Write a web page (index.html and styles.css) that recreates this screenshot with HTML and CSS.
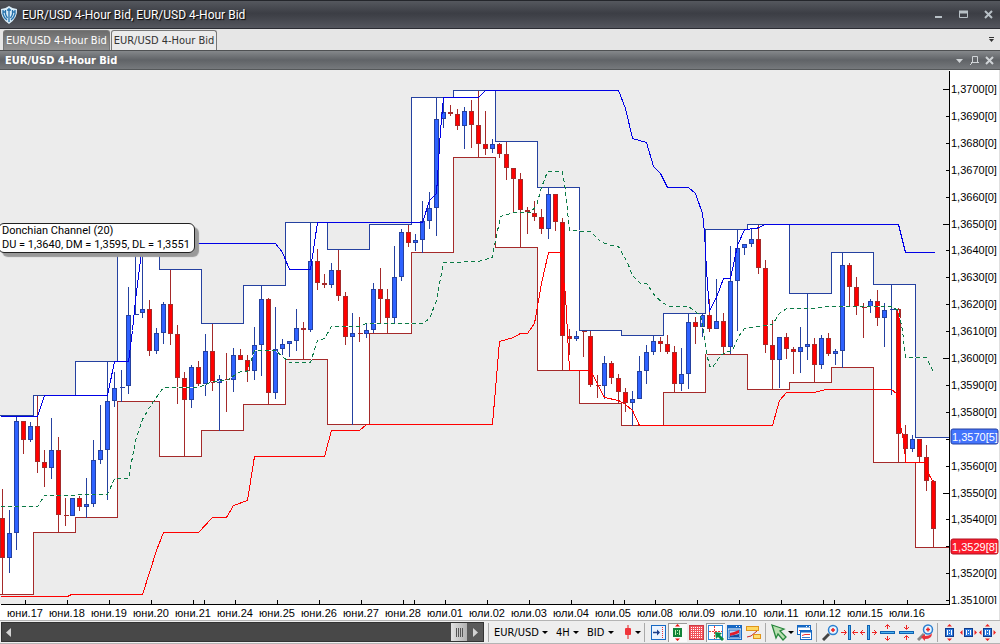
FILE: index.html
```html
<!DOCTYPE html>
<html lang="en">

<head>
    <meta charset="UTF-8">
    <meta name="viewport" content="width=device-width, initial-scale=1.0">
    <title>EUR/USD 4-Hour Bid</title>
    <link rel="stylesheet" href="styles.css">
</head>

<body>
    <header class="title-bar">
        <svg class="logo" width="18" height="18" viewBox="0 0 18 18">
            <path d="M1 3Q5 3 9 0Q13 3 17 3Q18 12 9 18Q0 12 1 3Z" fill="#d9ecf8" />
            <path d="M3 4V8Q4 12 7 14M5.500 4V8Q6 10 7.500 12M15 4V8Q14 12 11 14M12.500 4V8Q12 10 10.500 12M9 2V16M7 4H11M3 6H6M12 6H15" fill="none" stroke="#2470aa" stroke-width="1.300" />
        </svg>
        <h1>EUR/USD 4-Hour Bid, EUR/USD 4-Hour Bid</h1>
        <div class="window-buttons">
            <button aria-label="Minimize"><svg width="9" height="9"><path d="M1 7H8" stroke="#b8c0c6" stroke-width="2" /></svg></button>
            <button aria-label="Maximize"><svg width="9" height="9"><path d="M0 2H9" stroke="#b8c0c6" stroke-width="3" /><path d="M.5 2V7.500H8.500V2" stroke="#b8c0c6" fill="none" /></svg></button>
            <button aria-label="Close"><svg width="9" height="9"><path d="M1 1L8 8M8 1L1 8" stroke="#b8c0c6" stroke-width="2" /></svg></button>
        </div>
    </header>

    <nav class="tabs" role="tablist">
        <button class="tab active" role="tab" aria-selected="true">EUR/USD 4-Hour Bid</button>
        <button class="tab" role="tab" aria-selected="false">EUR/USD 4-Hour Bid</button>
        <button class="tab-menu" aria-label="Tab list"><svg width="5" height="6"><path d="M0 .5H5" stroke="#333" /><path d="M0 2H5L2.500 5Z" fill="#333" /></svg></button>
    </nav>

    <div class="panel-header">
        <h2>EUR/USD 4-Hour Bid</h2>
        <div class="panel-buttons">
            <button aria-label="Menu"><svg width="9" height="9"><path d="M1 3H8L4.500 7Z" fill="#d0d4d7" /></svg></button>
            <button aria-label="Pin"><svg width="9" height="9"><path d="M2.500 .5H7.500V6M2.500 .5V6.500M1 6.500H9M3 6L0 9" stroke="#d0d4d7" fill="none" /></svg></button>
            <button aria-label="Close"><svg width="9" height="9"><path d="M1 1L8 8M8 1L1 8" stroke="#d0d4d7" stroke-width="2" /></svg></button>
        </div>
    </div>

    <main class="chart">
        <svg class="chart-svg" id="chart" viewBox="0 70 1000 550"></svg>
        <div class="indicator-tip">
            <div>Donchian Channel (20)</div>
            <div>DU = 1,3640, DM = 1,3595, DL = 1,3551</div>
        </div>
    </main>

    <footer class="toolbar">
        <div class="scrollbar">
            <button class="scroll-left" aria-label="Scroll left"><svg width="6" height="9"><path d="M5 0V9L0 4.500Z" fill="#d4d4d4" /></svg></button>
            <div class="track"></div>
            <button class="thumb" aria-label="Scroll position"><svg width="9" height="9"><path d="M1.500 0V9M3.500 0V9M5.500 0V9M7.500 0V9" stroke="#555" /></svg></button>
            <button class="scroll-right" aria-label="Scroll right"><svg width="6" height="9"><path d="M1 0V9L6 4.500Z" fill="#d4d4d4" /></svg></button>
        </div>

        <div class="group selects">
            <label class="dropdown"><select aria-label="Instrument"><option>EUR/USD</option></select></label>
            <label class="dropdown"><select aria-label="Period"><option>4H</option></select></label>
            <label class="dropdown"><select aria-label="Side"><option>BID</option></select></label>
            <button class="dropdown" aria-label="Chart type"><svg width="8" height="14"><path d="M4 0V14" stroke="#e02020" /><rect x="1" y="3" width="6" height="7" rx="1" fill="#f0343a" /></svg></button>
        </div>

        <div class="group">
            <button aria-label="Shift chart"><svg width="17" height="17" viewBox="0 0 17 17"><rect x="1.500" y="1.500" width="14" height="14" fill="#eaf3ff" stroke="#1769c4" /><path d="M3 8.500H9" stroke="#1b3f8b" stroke-width="1.500" /><path d="M7 5.500L10 8.500L7 11.500Z" fill="#1b3f8b" /><path d="M12.500 3V14" stroke="#e33" stroke-dasharray="1 1" /></svg></button>
            <button class="pressed" aria-label="Auto scale"><svg width="17" height="17" viewBox="0 0 17 17"><rect x="4" y="4" width="9" height="9" fill="#14833a" /><path d="M6.500 6V11M10.500 6V11M8.500 6V7M8.500 9V10" stroke="#bff5b0" fill="none" /><path d="M6 2.500L8.500 0L11 2.500ZM6 14.500L8.500 17L11 14.500Z" fill="#e11" /></svg></button>
            <button aria-label="Grid"><svg width="17" height="17" viewBox="0 0 17 17"><rect x="1.500" y="1.500" width="14" height="14" fill="#f2545c" stroke="#cc3a44" /><path d="M3 3.500H15M3 5.500H15M3 7.500H15M3 9.500H15M3 11.500H15M3 13.500H15" stroke="#fff" stroke-dasharray="1 1" /></svg></button>
            <button class="pressed" aria-label="Crosshair"><svg width="17" height="17" viewBox="0 0 17 17"><rect x="1.500" y="1.500" width="14" height="14" fill="#fff" stroke="#2a84d8" /><path d="M7.500 2V15M2 7.500H15" stroke="#e33" stroke-dasharray="2 1" /><path d="M8 8L15 9L13 11L17 15L15 17L11 13L9 15Z" fill="#0d8a45" /></svg></button>
            <button aria-label="Chart window"><svg width="17" height="17" viewBox="0 0 17 17"><rect x="1.500" y="1.500" width="14" height="14" fill="#fff" stroke="#1769c4" /><path d="M1 3H16" stroke="#1769c4" stroke-width="3" /><path d="M10 2.500H11M13 2.500H14" stroke="#fff" /><rect x="3" y="6" width="11" height="8" fill="#b9d4f7" stroke="#1769c4" /><path d="M4 9L8 8L13 6V9L8 11L4 12Z" fill="#e21c2c" /><path d="M4 12L13 10V13H4Z" fill="#164b9e" /></svg></button>
            <button aria-label="Trade labels"><svg width="17" height="17" viewBox="0 0 17 17"><rect x="1.500" y="2.500" width="12" height="4" fill="#ffd860" stroke="#e0951a" /><path d="M2 13L6 12L12 7" stroke="#c62a2a" fill="none" /><rect x="8.500" y="10.500" width="7" height="4" fill="#ffe070" stroke="#e0951a" /></svg></button>
        </div>

        <div class="group">
            <button class="dropdown cursor" aria-label="Cursor"><svg width="17" height="17" viewBox="0 0 17 17"><path d="M1 1L13 5L9 7L15 13L12 16L7 10L5 14Z" fill="#b8dfb0" stroke="#27863b" stroke-width="1.300" /></svg></button>
            <button aria-label="Windows"><svg width="17" height="17" viewBox="0 0 17 17"><rect x="1.500" y="1.500" width="13" height="9" fill="#fff" stroke="#1769c4" /><path d="M1 2.500H15" stroke="#1769c4" stroke-width="2" /><path d="M3 6.500H5" stroke="#e33" /><rect x="4.500" y="6.500" width="11" height="9" fill="#fff" stroke="#1769c4" /><path d="M4 7.500H16" stroke="#1769c4" stroke-width="2" /><path d="M6 11.500L9 10.500H14" stroke="#e33" fill="none" /><path d="M10 2.500H11M13 2.500H14" stroke="#fff" /><path d="M6 13.500H14" stroke="#3b7bd0" /></svg></button>
        </div>

        <div class="group">
            <button aria-label="Zoom in"><svg width="17" height="17" viewBox="0 0 17 17"><path d="M1 16L7 10" stroke="#444" stroke-width="3" /><circle cx="11" cy="6" r="4.500" fill="#e6f4ff" stroke="#2b7fd0" stroke-width="1.500" /><path d="M9 6H13M11 4V8" stroke="#e22" stroke-width="1.500" /></svg></button>
            <button aria-label="Compress horizontally"><svg width="17" height="17" viewBox="0 0 17 17"><rect x="7.500" y="1.500" width="2" height="14" fill="#4fb4f0" stroke="#0f63b3" /><path d="M0 8.500H5M12 8.500H17M3 6L5.500 8.500L3 11M14 6L11.500 8.500L14 11" stroke="#e22" fill="none" /></svg></button>
            <button aria-label="Expand horizontally"><svg width="17" height="17" viewBox="0 0 17 17"><rect x="7.500" y="1.500" width="2" height="14" fill="#4fb4f0" stroke="#0f63b3" /><path d="M0 8.500H5M12 8.500H17M3 6L.5 8.500L3 11M14 6L16.500 8.500L14 11" stroke="#e22" fill="none" /></svg></button>
            <button aria-label="Expand vertically"><svg width="17" height="17" viewBox="0 0 17 17"><rect x="1.500" y="7.500" width="14" height="2" fill="#4fb4f0" stroke="#0f63b3" /><path d="M8.500 1V5M8.500 12V16M6 3L8.500 .5L11 3M6 14L8.500 16.500L11 14" stroke="#e22" fill="none" /></svg></button>
            <button aria-label="Compress vertically"><svg width="17" height="17" viewBox="0 0 17 17"><rect x="1.500" y="7.500" width="14" height="2" fill="#4fb4f0" stroke="#0f63b3" /><path d="M8.500 1V5M8.500 12V16M6 3L8.500 5.500L11 3M6 14L8.500 11.500L11 14" stroke="#e22" fill="none" /></svg></button>
            <button aria-label="Undo zoom"><svg width="17" height="17" viewBox="0 0 17 17"><path d="M1 16L7 10" stroke="#888" stroke-width="3" /><circle cx="11" cy="5.500" r="4.500" fill="#e6f4ff" stroke="#2b7fd0" stroke-width="1.500" /><path d="M9 5.500H13M11 3.500V7.500" stroke="#e22" stroke-width="1.500" /><path d="M4 13L8 10V12Q13 12 15 9Q15 15 8 15V17Z" fill="#e8323c" /></svg></button>
        </div>

        <div class="group fit">
            <button aria-label="Fit vertically"><svg width="17" height="17" viewBox="0 0 17 17"><rect x="4.500" y="4.500" width="8" height="8" fill="#2b78dc" stroke="#0f3a8b" /><path d="M6.500 6V11M10.500 6V11M8.500 6V7M8.500 9V10" stroke="#fff" /><path d="M6 2.500L8.500 0L11 2.500ZM6 14.500L8.500 17L11 14.500Z" fill="#e22" /></svg></button>
            <button aria-label="Fit horizontally"><svg width="17" height="17" viewBox="0 0 17 17"><rect x="4.500" y="4.500" width="8" height="8" fill="#2b78dc" stroke="#0f3a8b" /><path d="M6.500 6V11M10.500 6V11M8.500 6V7M8.500 9V10" stroke="#fff" /><path d="M2.500 6L0 8.500L2.500 11ZM14.500 6L17 8.500L14.500 11Z" fill="#e22" /></svg></button>
            <button aria-label="Fit all"><svg width="17" height="17" viewBox="0 0 17 17"><rect x="4.500" y="4.500" width="8" height="8" fill="#2b78dc" stroke="#0f3a8b" /><path d="M6.500 6V11M10.500 6V11M8.500 6V7M8.500 9V10" stroke="#fff" /><path d="M6 2.500L8.500 0L11 2.500ZM6 14.500L8.500 17L11 14.500ZM2.500 6L0 8.500L2.500 11ZM14.500 6L17 8.500L14.500 11Z" fill="#e22" /></svg></button>
        </div>
    </footer>

    <script src="chart.js"></script>
</body>

</html>
```
FILE: styles.css
```css
body {
    margin: 0;
    background-color: #e6e6e6;
    font-family: "DejaVu Sans Condensed", "DejaVu Sans", sans-serif;
    font-size: 11px;
}

button {
    display: flex;
    align-items: center;
    justify-content: center;
    padding: 0;
    border: none;
    background: none;
    font: inherit;
    color: inherit;
}

h1,
h2 {
    margin: 0;
}

.title-bar {
    display: flex;
    align-items: center;
    box-sizing: border-box;
    height: 29px;
    padding: 0 7px 0 0;
    border-top: 1px solid #24262b;
    border-bottom: 1px solid #2b2c33;
    background: linear-gradient(#55585e, #3c3e45 45%, #3f4148 55%, #54565e);
    color: #fff;
}

.title-bar h1 {
    flex: 1;
    margin-left: 4px;
    font-family: Roboto, sans-serif;
    font-size: 12px;
    font-weight: normal;
    text-shadow: 1px 1px 1px #000;
}

.window-buttons {
    display: flex;
    gap: 16px;
}

.tabs {
    display: flex;
    align-items: flex-end;
    gap: 1px;
    height: 21px;
    padding: 0 6px 0 3px;
    background-color: #e6e6e6;
}

.tab {
    box-sizing: border-box;
    height: 20px;
    padding: 0 2px;
    border: 1px solid #777;
    border-bottom: none;
    border-radius: 3px 3px 0 0;
    background-color: #ebebeb;
    color: #333;
    white-space: nowrap;
}

.tab.active {
    background: linear-gradient(#6c6c6c, #929292);
    color: #fff;
}

.tab-menu {
    align-self: center;
    margin-left: auto;
}

.panel-header {
    display: flex;
    align-items: center;
    justify-content: space-between;
    box-sizing: border-box;
    height: 20px;
    padding: 0 6px 0 5px;
    border-top: 1px solid #4e5052;
    border-bottom: 1px solid #55585a;
    background: linear-gradient(#85888b, #606367 50%, #76797c);
    color: #fff;
}

.panel-header h2 {
    font-size: 11px;
    font-weight: bold;
}

.panel-buttons {
    display: flex;
    gap: 6px;
}

.chart {
    position: relative;
    background-color: #fff;
}

.chart-svg {
    display: block;
    width: 100%;
    height: auto;
    font-family: "Liberation Sans", Arial, sans-serif;
    font-size: 11px;
}

.indicator-tip {
    position: absolute;
    top: 153px;
    left: -2px;
    box-sizing: border-box;
    width: 197px;
    padding: 0 3px;
    border: 1px solid #222;
    border-radius: 6px;
    background-color: #fff;
    box-shadow: 4px 4px 1px #999;
    font: 11px/14px Roboto, Arial, sans-serif;
    white-space: nowrap;
}

/* chart drawing */
.range {
    fill: #fff;
}

.line {
    fill: none;
    stroke-width: 1px;
}

.day-high {
    stroke: #2541a0;
}

.day-low {
    stroke: #a52a2a;
}

.upper {
    stroke: #0000e6;
}

.lower {
    stroke: #f00;
}

.middle-gap {
    stroke: #f4f4f4;
}

.middle {
    stroke: #0a7a45;
    stroke-dasharray: 4 3;
}

.candle.up {
    fill: #2e62ff;
    stroke: #2541a0;
}

.candle.down {
    fill: #f00;
    stroke: #a52a2a;
}

.axis {
    stroke: #000;
}

/* bottom toolbar */
.toolbar {
    display: flex;
    align-items: center;
    box-sizing: border-box;
    height: 24px;
    padding-right: 3px;
    border-top: 1px solid #b4b4b4;
    border-bottom: 1px solid #b4b4b4;
    background-color: #eee;
}

.scrollbar {
    display: flex;
    flex: 1;
    box-sizing: border-box;
    height: 20px;
    margin-left: 1px;
    border: 1px solid #333;
    background-color: #484848;
}

.scroll-left,
.scroll-right {
    width: 16px;
}

.scroll-left {
    justify-content: flex-start;
    padding-left: 4px;
}

.track {
    flex: 1;
}

.thumb {
    width: 16px;
    background: linear-gradient(90deg, #e2e2e2, #b0b0b0);
}

.scroll-right {
    background-color: #5a5a5a;
}

.group {
    display: flex;
    align-items: center;
    padding-left: 4px;
    margin-left: 2px;
    border-left: 1px solid #aaa;
}

.group button {
    width: 19px;
    height: 19px;
}

.group .pressed {
    background-color: #fafafa;
    box-shadow: inset 1px 1px 0 #999;
}

.selects {
    gap: 8px;
    padding-left: 5px;
    margin-left: 4px;
}

.fit {
    padding-left: 2px;
}

.dropdown {
    display: flex;
    align-items: center;
}

.dropdown::after {
    content: "";
    margin-left: 3px;
    border: 3px solid transparent;
    border-top-color: #000;
    border-bottom: none;
}

.dropdown select {
    padding: 0;
    border: none;
    appearance: none;
    background: none;
    color: #000;
    font: inherit;
}

.group button.dropdown {
    width: 20px;
}

.group button.cursor {
    width: 25px;
}

.group button.cursor::after {
    margin-left: 0;
}
```
FILE: chart.js
```js
// [start x, high, low] of each trading day
const days = [
    [-9, 415, 594], [33, 395, 532], [75, 361, 517], [117, 243, 401],
    [159, 269, 456], [201, 323, 430], [243, 285, 404], [285, 222, 359],
    [327, 249, 424], [369, 224, 333], [411, 97, 252], [453, 90, 157],
    [495, 141, 247], [537, 187, 370], [579, 330, 403], [621, 335, 425],
    [663, 313, 392], [705, 229, 354], [747, 224, 389], [789, 293, 382],
    [831, 252, 367], [873, 284, 462], [915, 437, 547]
];

// [direction, high, body top, body bottom, low], one candle every 7px
const candles = [
    ['d', 488, 518, 557, 594], ['u', 509, 533, 557, 572], ['u', 416, 421, 532, 549],
    ['d', 421, 421, 439, 453], ['u', 421, 426, 439, 441], ['d', 395, 426, 461, 472],
    ['d', 449, 462, 467, 486], ['u', 417, 450, 467, 478], ['d', 436, 450, 514, 532],
    ['d', 497, 515, 515, 525], ['u', 498, 498, 515, 515], ['d', 495, 498, 506, 510],
    ['u', 477, 504, 506, 517], ['u', 439, 460, 503, 506], ['u', 404, 450, 459, 463],
    ['u', 361, 401, 449, 499], ['u', 371, 388, 400, 406], ['u', 369, 387, 387, 401],
    ['u', 286, 315, 385, 393], ['u', 243, 314, 314, 314], ['u', 243, 309, 312, 317],
    ['d', 299, 309, 350, 355], ['u', 327, 333, 350, 353], ['u', 301, 304, 332, 343],
    ['d', 269, 304, 333, 344], ['d', 324, 334, 377, 403], ['d', 371, 378, 399, 456],
    ['u', 364, 367, 399, 407], ['d', 360, 367, 383, 385], ['u', 333, 351, 383, 395],
    ['d', 323, 351, 382, 390], ['u', 374, 379, 382, 430], ['d', 352, 379, 379, 411],
    ['u', 347, 355, 379, 391], ['d', 348, 355, 359, 359], ['d', 354, 360, 370, 381],
    ['u', 326, 345, 370, 379], ['u', 285, 299, 344, 375], ['d', 297, 299, 392, 404],
    ['u', 306, 349, 392, 398], ['u', 338, 344, 348, 354], ['u', 341, 341, 343, 356],
    ['u', 308, 328, 340, 350], ['d', 321, 328, 329, 359], ['u', 222, 261, 329, 331],
    ['d', 248, 261, 282, 289], ['d', 273, 283, 284, 287], ['u', 262, 270, 284, 287],
    ['d', 249, 270, 295, 300], ['d', 291, 296, 336, 344], ['u', 312, 333, 336, 424],
    ['d', 316, 333, 333, 341], ['u', 322, 330, 333, 337], ['u', 282, 289, 329, 332],
    ['d', 267, 289, 298, 323], ['d', 288, 299, 317, 333], ['u', 245, 277, 317, 323],
    ['u', 228, 232, 276, 280], ['d', 224, 232, 242, 246], ['u', 233, 240, 242, 250],
    ['u', 200, 221, 239, 252], ['u', 191, 208, 220, 228], ['u', 97, 119, 207, 235],
    ['u', 97, 112, 118, 127], ['d', 104, 112, 113, 115], ['d', 108, 114, 125, 129],
    ['u', 106, 111, 125, 148], ['d', 99, 111, 124, 147], ['d', 90, 125, 143, 157],
    ['d', 110, 144, 148, 154], ['u', 138, 144, 148, 152], ['d', 142, 144, 153, 157],
    ['d', 141, 154, 167, 179], ['d', 167, 168, 178, 211], ['d', 172, 179, 209, 247],
    ['d', 206, 210, 211, 233], ['d', 200, 213, 216, 220], ['d', 208, 217, 228, 233],
    ['u', 187, 194, 228, 238], ['d', 193, 194, 221, 230], ['d', 217, 222, 335, 370],
    ['d', 328, 336, 338, 354], ['u', 330, 336, 338, 340], ['d', 330, 331, 331, 356],
    ['d', 330, 336, 384, 386], ['d', 374, 385, 385, 397], ['u', 355, 363, 385, 398],
    ['d', 360, 363, 377, 383], ['d', 373, 378, 391, 403], ['d', 387, 392, 402, 411],
    ['u', 390, 399, 402, 425], ['u', 355, 371, 398, 398], ['u', 344, 352, 370, 383],
    ['u', 335, 341, 351, 354], ['d', 336, 341, 343, 351], ['d', 334, 344, 351, 353],
    ['d', 345, 352, 383, 392], ['u', 347, 374, 383, 390], ['u', 313, 322, 373, 388],
    ['d', 316, 322, 326, 343], ['u', 313, 315, 326, 336], ['d', 298, 315, 328, 331],
    ['u', 278, 321, 328, 328], ['d', 312, 321, 346, 354], ['u', 245, 281, 346, 353],
    ['u', 229, 248, 280, 330], ['u', 243, 244, 247, 254], ['u', 228, 239, 243, 246],
    ['d', 224, 239, 267, 273], ['d', 259, 268, 344, 352], ['d', 319, 345, 359, 389],
    ['u', 336, 337, 359, 387], ['d', 332, 337, 348, 358], ['d', 346, 349, 351, 373],
    ['u', 326, 347, 351, 372], ['u', 293, 344, 346, 359], ['d', 337, 344, 364, 382],
    ['u', 334, 338, 364, 368], ['d', 332, 338, 353, 355], ['u', 348, 351, 353, 364],
    ['u', 252, 265, 350, 367], ['d', 262, 265, 286, 306], ['d', 276, 287, 306, 314],
    ['d', 302, 307, 307, 337], ['u', 298, 301, 306, 312], ['d', 289, 301, 317, 325],
    ['u', 302, 310, 317, 346], ['u', 284, 309, 309, 394], ['d', 307, 309, 433, 462],
    ['d', 424, 434, 448, 455], ['u', 434, 439, 448, 451], ['d', 438, 439, 456, 461],
    ['d', 444, 457, 480, 490], ['d', 479, 481, 528, 547]
];

// Donchian channel
const upper = '0,416 37,416 44,395 107,395 114,361 128,361 132,330 135,300 141,252 142,243 275,243 282,252 289,269 310,269 317,222 422,222 429,200 436,193 440,130 443,97 478,97 485,90 618,90 625,108 632,138 646,142 653,166 660,173 667,187 688,187 695,193 702,213 704,232 706,270 709,310 716,297 723,278 730,278 737,245 744,229 756,228 765,224 898,224 905,252 934,252';
const lower = '0,596 67,596 71,594 142,594 156,550 163,532 198,532 212,517 226,517 233,505 247,500 254,456 324,456 331,430 359,430 366,424 492,424 499,341 513,337 520,333 527,333 534,323 541,283 548,252 560,252 565,295 569,370 590,370 604,397 618,400 625,404 632,410 639,425 772,425 779,400 786,392 814,392 825,389 891,389 896,393 899,420 904,445 905,462 925,462 929,475 933,482';
const middle = '0,506 37,506 44,495 107,494 114,478 128,478 135,440 142,419 149,407 155,398 163,387 198,387 212,381 226,380 240,371 247,371 254,350 275,350 289,362 310,362 317,340 324,338 331,326 359,326 366,323 422,323 429,318 436,300 443,262 478,261 492,257 494,245 500,216 513,212 530,212 536,205 541,187 547,171 562,171 565,190 569,230 590,231 600,241 610,245 618,246 627,262 632,275 640,283 646,283 655,296 662,302 668,306 688,306 700,315 703,330 706,352 709,366 712,367 720,355 727,351 732,350 738,336 744,328 751,327 772,324 779,313 786,308 814,308 828,306 890,306 898,310 902,330 905,357 926,357 933,372';

const dates = ['юни.17', 'юни.18', 'юни.19', 'юни.20', 'юни.21', 'юни.24', 'юни.25', 'юни.26', 'юни.27', 'юни.28',
    'юли.01', 'юли.02', 'юли.03', 'юли.04', 'юли.05', 'юли.08', 'юли.09', 'юли.10', 'юли.11', 'юли.12', 'юли.15', 'юли.16'];

const right = 949;
const bottom = 604;

function steps(column) {
    return days.map((day, i) => {
        const end = i + 1 < days.length ? days[i + 1][0] : right;
        return `${day[0]},${day[column]} ${end},${day[column]}`;
    }).join(' ');
}

function tag(y, label, fill, stroke) {
    return `<rect x="951" y="${y - 8}" width="47" height="15" rx="2" fill="${fill}" stroke="${stroke}" />` +
        `<text x="952" y="${y + 4}" fill="#fff">${label}</text>`;
}

let svg = `<rect x="0" y="70" width="${right}" height="534" fill="#ececec" />`;
svg += '<g transform="translate(0.5 0.5)" shape-rendering="crispEdges">';

days.forEach((day, i) => {
    const end = i + 1 < days.length ? days[i + 1][0] : right;
    svg += `<rect class="range" x="${day[0]}" y="${day[1]}" width="${end - day[0]}" height="${day[2] - day[1]}" />`;
});
svg += `<polyline class="line day-high" points="${steps(1)}" />`;
svg += `<polyline class="line day-low" points="${steps(2)}" />`;

candles.forEach(([dir, high, top, base, low], i) => {
    const x = 2 + i * 7;
    svg += `<g class="candle ${dir === 'u' ? 'up' : 'down'}"><path d="M${x} ${high}V${low}" />`;
    svg += top === base ? `<path d="M${x - 2} ${top}H${x + 3}" />` : `<rect x="${x - 2}" y="${top}" width="4" height="${base - top}" />`;
    svg += '</g>';
});

svg += `<polyline class="line lower" points="${lower}" />`;
svg += `<polyline class="line middle-gap" points="${middle}" />`;
svg += `<polyline class="line middle" points="${middle}" />`;
svg += `<polyline class="line upper" points="${upper}" />`;

// axes
svg += `<path class="axis" d="M${right} 70V${bottom}M0 ${bottom}H${right}" />`;
for (let i = 0; i < 20; i++) {
    const y = Math.round(89 + i * 26.9);
    svg += `<path class="axis" d="M${i % 5 === 0 ? 942 : 945} ${y}H${right}" />`;
}
dates.forEach((date, i) => {
    svg += `<path class="axis" d="M${25 + i * 42} 599V${bottom}" />`;
});
[204, 414, 624, 834].forEach(x => {
    svg += `<path class="axis" d="M${x} 599V${bottom}" />`;
});
svg += '</g>';

for (let i = 0; i < 20; i++) {
    if (i === 13 || i === 17) continue;
    svg += `<text x="951" y="${Math.round(93 + i * 26.9)}">1,${3700 - i * 10}[0]</text>`;
}
svg += `<rect x="950" y="${bottom}" width="50" height="16" fill="#fff" />`;
dates.forEach((date, i) => {
    svg += `<text x="${25 + i * 42}" y="617" text-anchor="middle">${date}</text>`;
});
svg += tag(437, '1,3570[5]', '#4373fb', '#2541a0');
svg += tag(547, '1,3529[8]', '#fb1c2c', '#b01020');
svg += '<rect x="999" y="70" width="1" height="550" fill="#e0e0e0" />';

document.getElementById('chart').innerHTML = svg;
```
